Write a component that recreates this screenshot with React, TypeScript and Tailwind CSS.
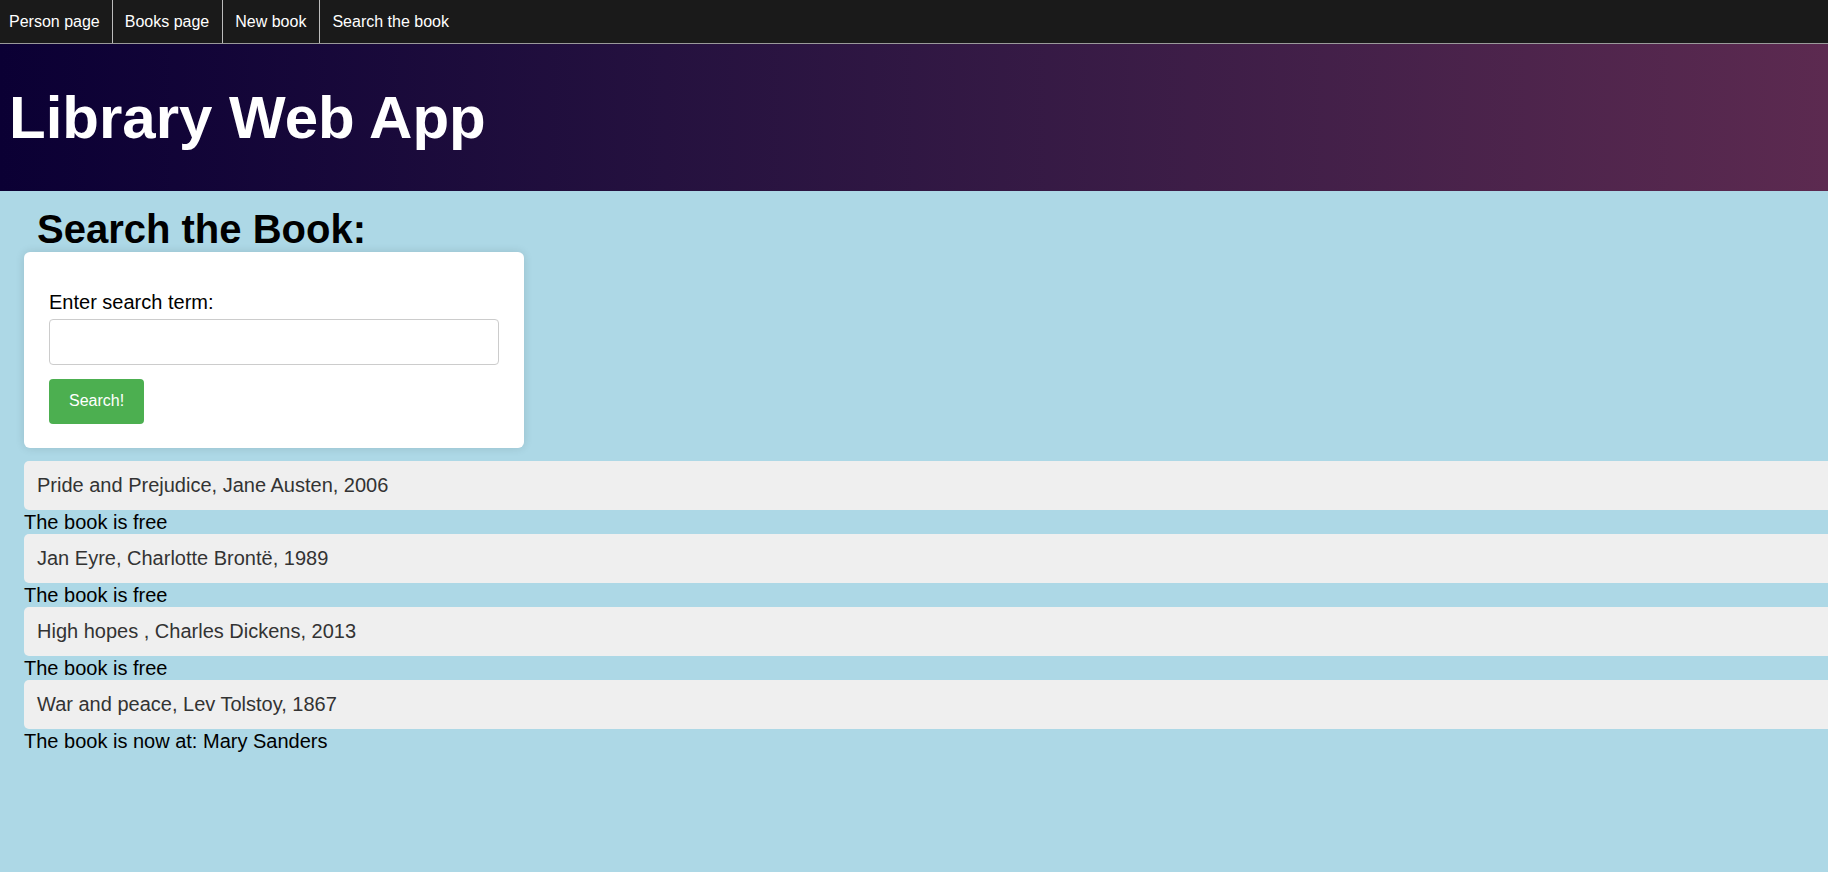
import React from "react";

const books = [
  { title: "Pride and Prejudice, Jane Austen, 2006", status: "The book is free" },
  { title: "Jan Eyre, Charlotte Brontë, 1989", status: "The book is free" },
  { title: "High hopes , Charles Dickens, 2013", status: "The book is free" },
  { title: "War and peace, Lev Tolstoy, 1867", status: "The book is now at: Mary Sanders" },
];

export default function App() {
  return (
    <div className="min-h-screen w-full overflow-hidden bg-[#add8e6] font-['Liberation_Sans',Arial,sans-serif] text-black">
      <nav className="flex h-[44px] border-b border-[#9a9a9a] bg-[#1a1a1a] text-[16px] text-white">
        <a className="flex h-full items-center border-r border-[#bdbdbd] pl-[9px] pr-[12px]">Person page</a>
        <a className="flex h-full items-center border-r border-[#bdbdbd] pl-[12px] pr-[13px]">Books page</a>
        <a className="flex h-full items-center border-r border-[#bdbdbd] pl-[12px] pr-[13px]">New book</a>
        <a className="flex h-full items-center pl-[12px] pr-[13px]">Search the book</a>
      </nav>
      <header className="flex h-[147px] items-center bg-linear-to-r from-[#0b0034] to-[#5c2a50] pl-[9px]">
        <h1 className="text-[60px] font-bold leading-[69px] text-white">Library Web App</h1>
      </header>
      <main className="pl-[24px]">
        <h2 className="mt-[15px] pl-[13px] text-[40px] font-bold leading-[46px]">Search the Book:</h2>
        <div className="w-[500px] rounded-[6px] bg-white px-[25px] pb-[24px] pt-[39px] shadow-[0_0_10px_rgba(0,0,0,0.12)]">
          <label className="block text-[20px] leading-[23px]">Enter search term:</label>
          <input
            type="text"
            className="mt-[5px] block h-[46px] w-[450px] rounded-[4px] border border-[#cccccc] bg-white px-[10px] text-[16px] outline-none"
          />
          <button className="mt-[14px] block h-[45px] rounded-[4px] bg-[#4caf50] px-[20px] pb-[2px] text-[16px] text-white">
            Search!
          </button>
        </div>
        <div className="mt-[13px]">
          {books.map((b) => (
            <div key={b.title}>
              <div className="h-[49px] rounded-l-[5px] bg-[#efefef] px-[13px] py-[13px] text-[20px] leading-[23px] text-[#333333]">
                {b.title}
              </div>
              <div className="text-[20px] leading-[24px]">{b.status}</div>
            </div>
          ))}
        </div>
      </main>
    </div>
  );
}
